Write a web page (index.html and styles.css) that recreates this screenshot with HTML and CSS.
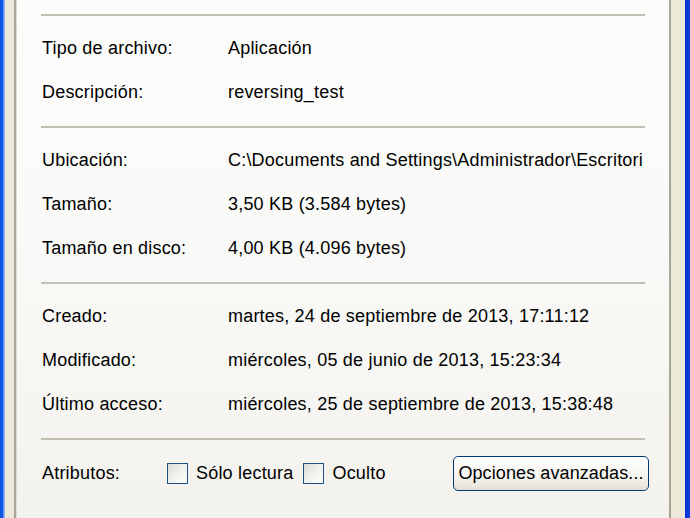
FILE: index.html
```html
<!DOCTYPE html>
<html>
<head lang="es">
    <meta charset="UTF-8">
    <title>Propiedades</title>
    <link rel="stylesheet" href="styles.css">
</head>
<body>
<div id="window">
    <div class="edge-left"></div>
    <div id="page">
        <div class="sep"></div>
        <div class="section">
            <div class="row"><span class="label">Tipo de archivo:</span><span class="value">Aplicación</span></div>
            <div class="row"><span class="label">Descripción:</span><span class="value">reversing_test</span></div>
        </div>
        <div class="sep"></div>
        <div class="section">
            <div class="row"><span class="label">Ubicación:</span><span class="value">C:\Documents and Settings\Administrador\Escritori</span></div>
            <div class="row"><span class="label">Tamaño:</span><span class="value">3,50 KB (3.584 bytes)</span></div>
            <div class="row"><span class="label">Tamaño en disco:</span><span class="value">4,00 KB (4.096 bytes)</span></div>
        </div>
        <div class="sep"></div>
        <div class="section">
            <div class="row"><span class="label">Creado:</span><span class="value">martes, 24 de septiembre de 2013, 17:11:12</span></div>
            <div class="row"><span class="label">Modificado:</span><span class="value">miércoles, 05 de junio de 2013, 15:23:34</span></div>
            <div class="row"><span class="label">Último acceso:</span><span class="value">miércoles, 25 de septiembre de 2013, 15:38:48</span></div>
        </div>
        <div class="sep"></div>
        <div id="attrs">
            <span class="attr-label">Atributos:</span>
            <label class="check"><span class="box"></span>Sólo lectura</label>
            <label class="check"><span class="box"></span>Oculto</label>
            <button id="advanced">Opciones avanzadas...</button>
        </div>
    </div>
    <div class="edge-right"></div>
</div>
</body>
</html>
```
FILE: styles.css
```css
*{
    margin: 0;
    padding: 0;
}
body{
    font-family: "Liberation Sans", Arial, sans-serif;
    font-size: 18px;
    letter-spacing: 0.2px;
    color: #000000;
    background: #ece9d8;
}
#window{
    width: 690px;
    height: 518px;
    display: flex;
    overflow: hidden;
}
.edge-left{
    width: 17px;
    background: linear-gradient(to right, #0a55e3 0, #0a55e3 3px, #5a8ef0 3px, #9cb8f0 5px, #ece9d8 5px, #ece9d8 14px, #a8a698 14px, #a8a698 16px, #dedcd2 16px);
}
.edge-right{
    width: 21px;
    background: linear-gradient(to right, #a8a698 0, #a8a698 2px, #ece9d8 2px, #ece9d8 16px, #0832d0 16px, #0a3fe0 21px);
}
#page{
    flex: 1;
    padding: 14px 24px 0 24px;
    background: linear-gradient(to bottom, #fcfcfb 0%, #f9f9f7 50%, #f3f2ed 100%);
}
.sep{
    height: 2px;
    background: #c3c0b3;
}
.section{
    padding: 11px 0;
}
.row{
    height: 44px;
    box-sizing: border-box;
    padding-bottom: 2px;
    display: flex;
    align-items: center;
    padding-left: 1px;
    white-space: nowrap;
}
.label{
    width: 186px;
    flex: none;
}
#attrs{
    height: 68px;
    box-sizing: border-box;
    padding-bottom: 2px;
    display: flex;
    align-items: center;
    padding-left: 1px;
    margin-right: -4px;
}
.attr-label{
    width: 125px;
}
.check{
    display: flex;
    align-items: center;
    margin-right: 10px;
}
.box{
    width: 19px;
    height: 19px;
    border: 1px solid #1c5180;
    background: linear-gradient(135deg, #dcdcd5 0%, #f0f0ec 50%, #ffffff 100%);
    margin-right: 8px;
}
#advanced{
    margin-left: auto;
    width: 196px;
    height: 35px;
    border: 1px solid #003c74;
    border-radius: 5px;
    background: linear-gradient(to bottom, #ffffff 0%, #f5f4ef 60%, #e3e0d6 100%);
    font-family: "Liberation Sans", Arial, sans-serif;
    font-size: 18px;
    letter-spacing: 0.1px;
    color: #000000;
}
```
